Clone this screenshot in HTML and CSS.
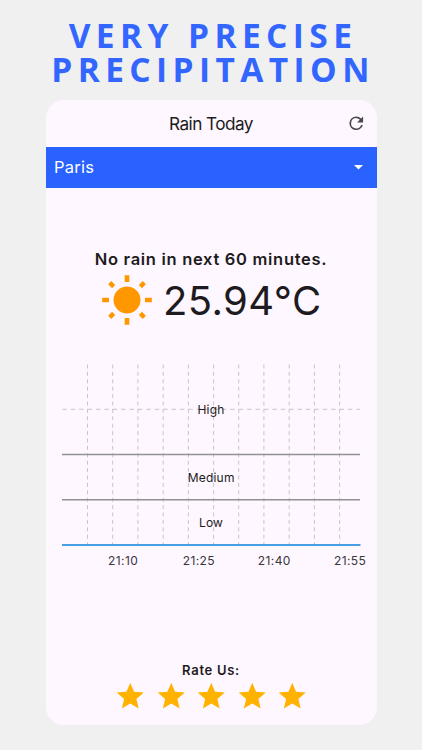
FILE: index.html
```
<!DOCTYPE html>
<html lang="en">
<head>
<meta charset="utf-8">
<title>Rain Today</title>
<link rel="stylesheet" href="styles.css">
</head>
<body>
<h1 class="headline">VERY PRECISE<br>PRECIPITATION</h1>
<main class="phone">
  <header class="app-bar">
    <span class="side"></span>
    <span class="title">Rain Today</span>
    <svg class="refresh" viewBox="0 0 24 24"><path d="M17.65 6.35A7.96 7.96 0 0 0 12 4a8 8 0 1 0 7.73 10h-2.08A6 6 0 1 1 12 6c1.66 0 3.14.69 4.22 1.78L13 11h7V4z"/></svg>
  </header>
  <div class="city">
    <span>Paris</span>
    <svg class="caret" viewBox="0 0 10 5"><path d="M0 0h10L5 5z"/></svg>
  </div>
  <p class="forecast">No rain in next 60 minutes.</p>
  <div class="weather">
    <svg class="sun" viewBox="-25 -25 50 50">
      <circle r="13.5"/>
      <path d="M-2.3-24.8h4.6v6.8h-4.6zM-2.3 18h4.6v6.8h-4.6zM-24.8-2.3h6.8v4.6h-6.8zM18-2.3h6.8v4.6H18z"/>
      <path transform="rotate(45)" d="M-2.2-24.5h4.4v5.6h-4.4zM-2.2 18.9h4.4v5.6h-4.4zM-24.5-2.2h5.6v4.4h-5.6zM18.9-2.2h5.6v4.4h-5.6z"/>
    </svg>
    <span class="temp">25.94°C</span>
  </div>
  <svg class="chart" viewBox="45 360 332 212">
    <path class="grid" d="M87.5 364.5V545M112.7 364.5V545M137.9 364.5V545M163.2 364.5V545M188.4 364.5V545M213.6 364.5V545M238.7 364.5V545M263.9 364.5V545M289.2 364.5V545M314.4 364.5V545M339.6 364.5V545"/>
    <path class="grid across" d="M62.3 409.3H360"/>
    <path class="level" d="M62 454.5H360M62 499.7H360"/>
    <path class="rain" d="M62 545H360.5"/>
    <g class="level-label">
      <text x="211" y="413.7">High</text>
      <text x="211.2" y="481.7">Medium</text>
      <text x="211" y="527">Low</text>
    </g>
    <g class="time-label">
      <text x="123.1" y="564.7">21:10</text>
      <text x="198.9" y="564.7">21:25</text>
      <text x="274.3" y="564.7">21:40</text>
      <text x="350.1" y="564.7">21:55</text>
    </g>
  </svg>
  <p class="rate">Rate Us:</p>
  <div class="stars">
    <svg viewBox="0 0 24 24"><path d="M12 17.27 18.18 21l-1.64-7.03L22 9.24l-7.19-.61L12 2 9.19 8.63 2 9.24l5.46 4.73L5.82 21z"/></svg>
    <svg viewBox="0 0 24 24"><path d="M12 17.27 18.18 21l-1.64-7.03L22 9.24l-7.19-.61L12 2 9.19 8.63 2 9.24l5.46 4.73L5.82 21z"/></svg>
    <svg viewBox="0 0 24 24"><path d="M12 17.27 18.18 21l-1.64-7.03L22 9.24l-7.19-.61L12 2 9.19 8.63 2 9.24l5.46 4.73L5.82 21z"/></svg>
    <svg viewBox="0 0 24 24"><path d="M12 17.27 18.18 21l-1.64-7.03L22 9.24l-7.19-.61L12 2 9.19 8.63 2 9.24l5.46 4.73L5.82 21z"/></svg>
    <svg viewBox="0 0 24 24"><path d="M12 17.27 18.18 21l-1.64-7.03L22 9.24l-7.19-.61L12 2 9.19 8.63 2 9.24l5.46 4.73L5.82 21z"/></svg>
  </div>
</main>
</body>
</html>
```
FILE: styles.css
```
* { box-sizing: border-box; }
body {
  margin: 0;
  height: 750px;
  overflow: hidden;
  background: #f0f0f0;
  color: #1d1b20;
  font-family: Inter, sans-serif;
}
.headline {
  height: 100px;
  margin: 0;
  padding: 18px 0 0 4px;
  text-align: center;
  color: #3366ff;
  font: 700 33.5px/34px "Open Sans", sans-serif;
  letter-spacing: 5.4px;
  white-space: nowrap;
}
.phone {
  width: 331px;
  height: 624.5px;
  margin: 0 auto;
  overflow: hidden;
  border-radius: 18px;
  background: #fef7ff;
  display: flex;
  flex-direction: column;
}
.app-bar {
  flex: none;
  height: 46.5px;
  padding: 0 10px;
  display: flex;
  align-items: center;
  justify-content: space-between;
}
.side, .refresh { width: 20.5px; height: 20.5px; }
.refresh { fill: #49454f; }
.title { font-size: 17.2px; letter-spacing: -.55px; }
.city {
  flex: none;
  height: 41.5px;
  padding: 0 14px 0 8.5px;
  display: flex;
  align-items: center;
  justify-content: space-between;
  background: #2962ff;
  color: #fff;
  font-size: 16.5px;
  letter-spacing: .25px;
}
.caret { width: 9px; height: 4.5px; fill: #fff; }
.forecast {
  margin: 61px 0 0;
  text-align: center;
  font-size: 16.5px;
  line-height: 21px;
  font-weight: 600;
  letter-spacing: .7px;
}
.weather {
  height: 60px;
  padding-left: 1.6px;
  display: flex;
  align-items: center;
  justify-content: center;
  gap: 11px;
}
.sun { width: 50px; height: 50px; fill: #ff9800; }
.temp {
  font-size: 40px;
  line-height: 50px;
  letter-spacing: .4px;
  padding-top: 2px;
}
.chart {
  flex: none;
  width: 332px;
  height: 212px;
  margin: 30px 0 0 -.5px;
  font-size: 12px;
  letter-spacing: .4px;
}
.grid { fill: none; stroke: #c9c3ca; stroke-width: 1; stroke-dasharray: 4 3.4; }
.across { stroke-dasharray: 4.5 3.9; }
.level { fill: none; stroke: #929094; stroke-width: 1.5; }
.rain { fill: none; stroke: #4a9fe3; stroke-width: 2; }
.chart text { text-anchor: middle; }
.level-label { fill: #1d1b20; letter-spacing: .2px; }
.time-label { fill: #39363c; }
.rate {
  margin: 88px 0 0;
  text-align: center;
  font-size: 13px;
  line-height: 20px;
  font-weight: 600;
  letter-spacing: .7px;
}
.stars {
  display: flex;
  justify-content: center;
  gap: 7.9px;
  padding-left: .8px;
  fill: #ffb300;
}
.stars svg { width: 32.5px; height: 32.5px; }
```
